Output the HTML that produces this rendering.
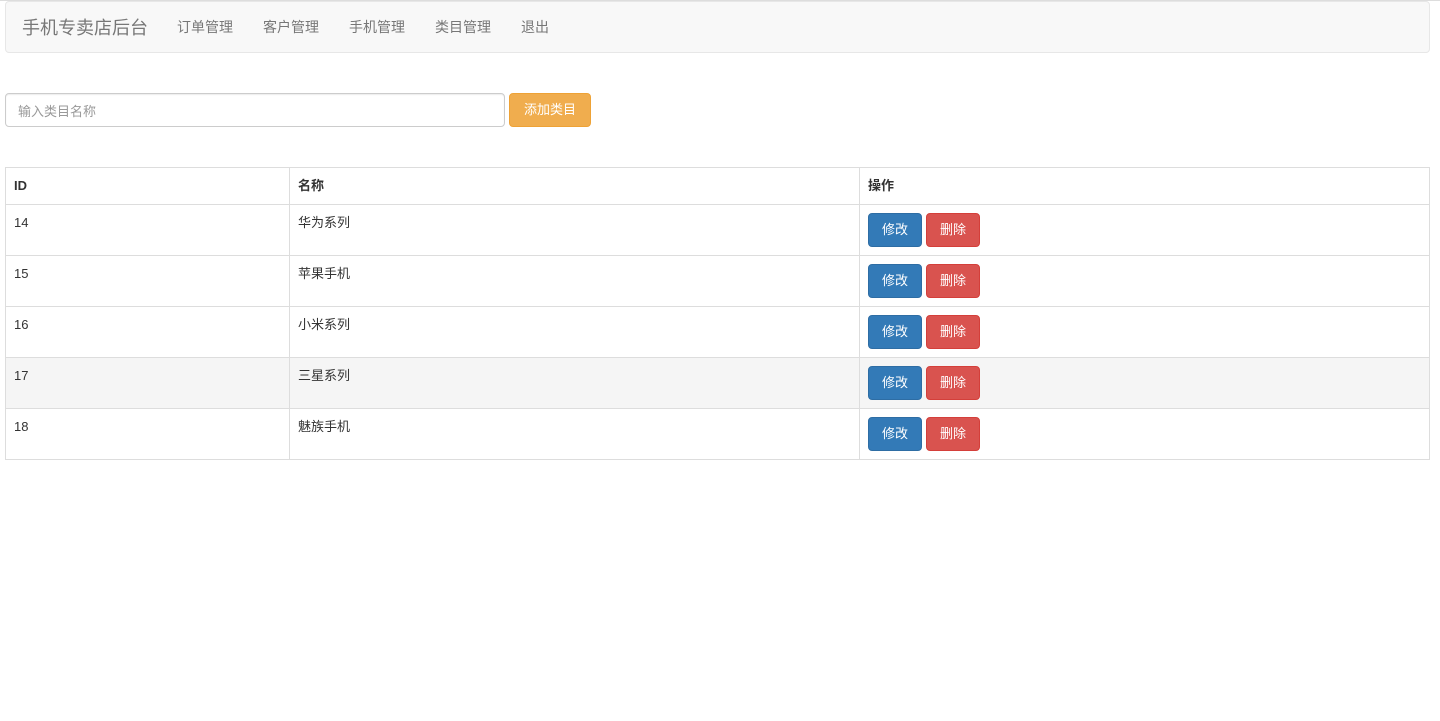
<!DOCTYPE html><html><head><meta charset="utf-8"><style>
body{margin:0;font-family:"Liberation Sans","Noto Sans CJK SC",sans-serif;font-size:14px;color:#333;background:#fff;border-top:1px solid #ddd}
.nav{position:absolute;left:5px;top:1px;width:1423px;height:50px;background:#f8f8f8;border:1px solid #e7e7e7;border-radius:4px}
.brand{position:absolute;left:16px;top:12px;font-size:18px;color:#777}
.nav a{position:absolute;top:15px;color:#777;font-size:14px}
.inp{position:absolute;left:5px;top:93px;width:498px;height:32px;border:1px solid #ccc;border-radius:4px;box-shadow:inset 0 1px 1px rgba(0,0,0,.075)}
.inp span{position:absolute;left:12px;top:7px;color:#999;font-size:13px}
.add{position:absolute;left:509px;top:93px;width:80px;height:32px;background:#f0ad4e;border:1px solid #eea236;border-radius:4px;color:#fff;font-size:13px;text-align:center;line-height:32px}
table{position:absolute;left:5px;top:167px;width:1425px;border-collapse:collapse}
td,th{border:1px solid #ddd;padding:8px;text-align:left;vertical-align:top;font-size:13px;line-height:20px}
th{height:20px}
td{height:34px}
tr.h td{background:#f5f5f5}
.b{display:inline-block;width:52px;height:32px;line-height:32px;text-align:center;color:#fff;border-radius:4px;font-size:13px;border:1px solid}
.p{background:#337ab7;border-color:#2e6da4}.d{background:#d9534f;border-color:#d43f3a;margin-left:4px}
</style></head><body>
<div class="nav"><span class="brand">手机专卖店后台</span>
<a style="left:171px">订单管理</a><a style="left:257px">客户管理</a><a style="left:343px">手机管理</a><a style="left:429px">类目管理</a><a style="left:515px">退出</a></div>
<div class="inp"><span>输入类目名称</span></div>
<div class="add">添加类目</div>
<table>
<tr><th style="width:267px">ID</th><th style="width:553px">名称</th><th>操作</th></tr>
<tr><td>14</td><td>华为系列</td><td><span class="b p">修改</span><span class="b d">删除</span></td></tr>
<tr><td>15</td><td>苹果手机</td><td><span class="b p">修改</span><span class="b d">删除</span></td></tr>
<tr><td>16</td><td>小米系列</td><td><span class="b p">修改</span><span class="b d">删除</span></td></tr>
<tr class="h"><td>17</td><td>三星系列</td><td><span class="b p">修改</span><span class="b d">删除</span></td></tr>
<tr><td>18</td><td>魅族手机</td><td><span class="b p">修改</span><span class="b d">删除</span></td></tr>
</table>
</body></html>
